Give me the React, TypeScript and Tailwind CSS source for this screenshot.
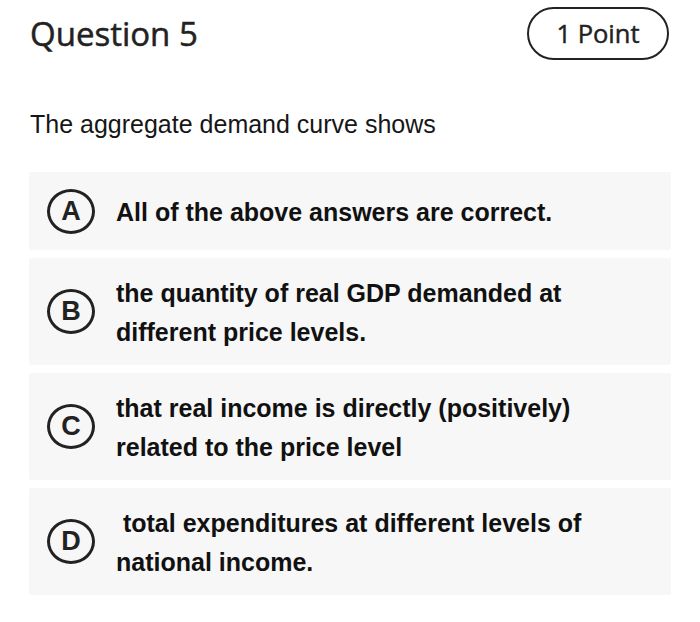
import React from "react";

const options: { letter: string; lines: string[]; tall: boolean }[] = [
  { letter: "A", lines: ["All of the above answers are correct."], tall: false },
  { letter: "B", lines: ["the quantity of real GDP demanded at", "different price levels."], tall: true },
  { letter: "C", lines: ["that real income is directly (positively)", "related to the price level"], tall: true },
  { letter: "D", lines: ["\u00a0total expenditures at different levels of", "national income."], tall: true },
];

export default function App() {
  return (
    <div className="w-[700px] h-[622px] bg-white px-[29px] pt-[7px]" style={{ fontFamily: '"Liberation Sans", Arial, sans-serif' }}>
      <div className="flex items-center justify-between pl-px pr-[2px]">
        <h1
          className="text-[33px] leading-[40px] font-normal text-[#222] [-webkit-text-stroke:0.5px_#222]"
          style={{ fontFamily: '"Open Sans", "Noto Sans", sans-serif' }}
        >
          Question 5
        </h1>
        <div
          className="w-[142px] h-[53px] rounded-full border-2 border-[#222] flex items-center justify-center text-[25.5px] text-[#222] font-normal [-webkit-text-stroke:0.45px_#222]"
          style={{ fontFamily: '"Open Sans", "Noto Sans", sans-serif' }}
        >
          1 Point
        </div>
      </div>
      <p className="mt-[49px] pl-px text-[25px] leading-[30px] text-[#161616]">
        The aggregate demand curve shows
      </p>
      <div className="mt-[33px] flex flex-col gap-2">
        {options.map((o) => (
          <div
            key={o.letter}
            className={`flex items-center bg-[#f7f7f7] rounded-[2px] pl-[18px] ${o.tall ? "h-[107px]" : "h-[78px]"}`}
          >
            <div className="w-[48px] h-[45px] rounded-[50%] border-[3px] border-[#222] flex items-center justify-center text-[27px] font-bold text-[#222] shrink-0">
              {o.letter}
            </div>
            <div className="ml-[21px] pt-[3px] text-[25px] leading-[39px] font-bold text-[#111]">
              {o.lines.map((l, i) => (
                <div key={i} className="whitespace-pre">{l}</div>
              ))}
            </div>
          </div>
        ))}
      </div>
    </div>
  );
}
